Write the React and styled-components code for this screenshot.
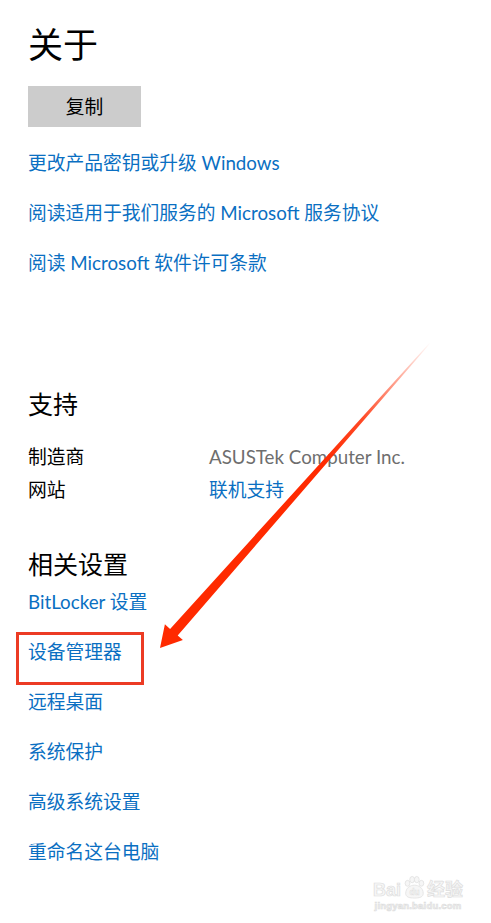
import React from 'react';
import styled, { createGlobalStyle } from 'styled-components';

const GlobalStyle = createGlobalStyle`
  html, body {
    margin: 0;
    padding: 0;
    background: #fff;
  }
  body {
    font-family: Lato, "Noto Sans CJK SC", sans-serif;
    color: #000;
  }
`;

const Page = styled.div`
  position: relative;
  width: 491px;
  height: 923px;
  overflow: hidden;
  padding: 22px 0 0 28px;
  box-sizing: border-box;
`;

const Title = styled.h1`
  margin: 0;
  font-size: 35px;
  font-weight: 400;
  line-height: 44px;
  height: 44px;
`;

const CopyButton = styled.button`
  display: block;
  margin-top: 20px;
  width: 113px;
  height: 41px;
  border: none;
  background: #cccccc;
  font-family: inherit;
  font-size: 18.75px;
  color: #000;
  padding: 0;
  line-height: 41px;
`;

const LinkList = styled.div`
  display: flex;
  flex-direction: column;
  align-items: flex-start;
  gap: ${p => p.$gap || 0}px;
  margin-top: ${p => p.$top || 0}px;
`;

const TextLink = styled.a`
  position: relative;
  display: block;
  font-size: 18.75px;
  line-height: ${p => p.$lh || 50}px;
  height: ${p => p.$lh || 50}px;
  color: #0a6fc2;
  text-decoration: none;
`;

const SectionTitle = styled.h2`
  margin: ${p => p.$top}px 0 0;
  font-size: 25px;
  font-weight: 400;
  line-height: 40px;
  height: 40px;
`;

const InfoGrid = styled.div`
  display: grid;
  grid-template-columns: 181px auto;
  grid-auto-rows: 33px;
  margin-top: 15.5px;
  font-size: 18.75px;
  line-height: 33px;
`;

const InfoValue = styled.span`
  color: ${p => (p.$link ? '#0a6fc2' : '#6e6e6e')};
`;

const Highlight = styled.span`
  position: absolute;
  left: -12px;
  top: -2px;
  width: 128px;
  height: 53px;
  box-sizing: border-box;
  border: 3px solid #ec3b24;
  pointer-events: none;
`;

const ArrowLayer = styled.svg`
  position: absolute;
  left: 0;
  top: 0;
  pointer-events: none;
`;

const Watermark = styled.div`
  position: absolute;
  right: 28px;
  bottom: 11px;
  display: flex;
  flex-direction: column;
  align-items: center;
  color: #f6f6f6;
  -webkit-text-stroke: 0.7px #dedede;
  font-family: "Liberation Sans", "Noto Sans CJK SC", sans-serif;
  font-weight: 700;
`;

const MarkRow = styled.div`
  display: flex;
  align-items: flex-end;
  font-size: 18px;
  line-height: 19px;
`;

const MarkSub = styled.div`
  font-size: 9.5px;
  line-height: 12px;
  letter-spacing: 0.2px;
`;

const Paw = () => (
  <svg width="24" height="26" viewBox="0 0 26 26" style={{ margin: '0 1px' }}>
    <g fill="#f6f6f6" stroke="#dedede" strokeWidth="0.8">
      <ellipse cx="6" cy="9" rx="2.6" ry="3.2" />
      <ellipse cx="11" cy="5" rx="2.6" ry="3.4" />
      <ellipse cx="16" cy="5" rx="2.6" ry="3.4" />
      <ellipse cx="21" cy="9" rx="2.6" ry="3.2" />
      <path d="M4 20 C4 14 9 11 13.5 11 C18 11 23 14 23 20 C23 24 19 25 13.5 25 C8 25 4 24 4 20 Z" />
    </g>
    <text x="13.5" y="22" textAnchor="middle" fontSize="9" fontWeight="700" fill="#f6f6f6" stroke="#dedede" strokeWidth="0.5" fontFamily="Liberation Sans, sans-serif">du</text>
  </svg>
);

const Arrow = () => (
  <ArrowLayer width="491" height="923" viewBox="0 0 491 923">
    <defs>
      <linearGradient id="fade" gradientUnits="userSpaceOnUse" x1="430" y1="342" x2="160" y2="648">
        <stop offset="0" stopColor="#ff2a00" stopOpacity="0" />
        <stop offset="0.25" stopColor="#ff2a00" stopOpacity="0.85" />
        <stop offset="0.4" stopColor="#ff2a00" stopOpacity="1" />
        <stop offset="1" stopColor="#ff2a00" stopOpacity="1" />
      </linearGradient>
    </defs>
    <polygon
      fill="url(#fade)"
      points="429.6,342.7 170.1,628.9 164.9,624.3 160,648 182.9,640.1 177.7,635.5 430.4,343.3"
    />
  </ArrowLayer>
);

const related = ['BitLocker 设置', '设备管理器', '远程桌面', '系统保护', '高级系统设置', '重命名这台电脑'];

export default function App() {
  return (
    <>
      <GlobalStyle />
      <Page>
        <Title>关于</Title>
        <CopyButton>复制</CopyButton>
        <LinkList $top={11}>
          <TextLink>更改产品密钥或升级 Windows</TextLink>
          <TextLink>阅读适用于我们服务的 Microsoft 服务协议</TextLink>
          <TextLink>阅读 Microsoft 软件许可条款</TextLink>
        </LinkList>

        <SectionTitle $top={96}>支持</SectionTitle>
        <InfoGrid>
          <span>制造商</span>
          <InfoValue>ASUSTek Computer Inc.</InfoValue>
          <span>网站</span>
          <InfoValue $link>联机支持</InfoValue>
        </InfoGrid>

        <SectionTitle $top={38.5}>相关设置</SectionTitle>
        <LinkList $gap={14}>
          {related.map(label => (
            <TextLink key={label} $lh={36}>
              {label}
              {label === '设备管理器' && <Highlight />}
            </TextLink>
          ))}
        </LinkList>

        <Arrow />
        <Watermark>
          <MarkRow>
            <span>Bai</span>
            <Paw />
            <span>经验</span>
          </MarkRow>
          <MarkSub>jingyan.baidu.com</MarkSub>
        </Watermark>
      </Page>
    </>
  );
}
